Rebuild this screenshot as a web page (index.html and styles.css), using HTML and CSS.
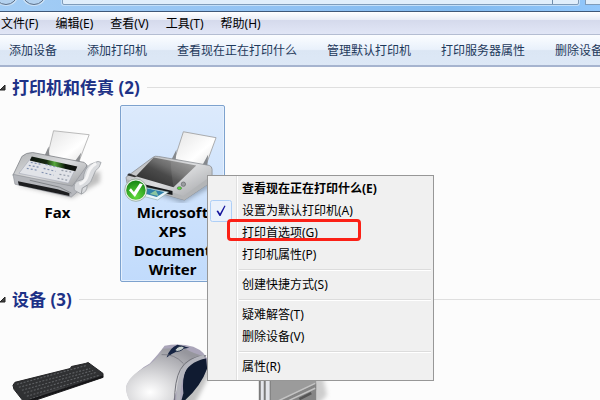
FILE: index.html
```html
<!DOCTYPE html>
<html lang="zh-CN">
<head>
  <meta charset="UTF-8">
  <meta name="viewport" content="width=device-width, initial-scale=1.0">
  <title>设备和打印机</title>
  <link rel="stylesheet" href="styles.css">
</head>
<body>
  <header class="titlebar">
    <button class="nav-btn" aria-label="后退"></button>
    <button class="nav-btn" aria-label="前进"></button>
    <div class="address">
      <input class="address-input" type="text" aria-label="地址">
      <button class="refresh" aria-label="刷新"></button>
    </div>
    <input class="search" type="text" aria-label="搜索">
  </header>

  <nav class="menubar">
    <button>文件(F)</button>
    <button>编辑(E)</button>
    <button>查看(V)</button>
    <button>工具(T)</button>
    <button>帮助(H)</button>
  </nav>

  <div class="toolbar">
    <button>添加设备</button>
    <button>添加打印机</button>
    <button>查看现在正在打印什么</button>
    <button>管理默认打印机</button>
    <button>打印服务器属性</button>
    <button>删除设备</button>
  </div>

  <main class="content">
    <section class="group">
      <h2 class="group-title">
        <svg class="arrow" width="6" height="8" viewBox="0 0 6 8"><path d="M5 1v5H0z" fill="#444" stroke="#222"/></svg>
        <span>打印机和传真 (2)</span>
      </h2>
      <div class="tiles">
        <button class="tile">
          <svg class="icon" viewBox="5 106 104 98">
            <defs>
              <linearGradient id="paper" x1="0" y1="0" x2="1" y2="1"><stop offset="0" stop-color="#e4e4e4"/><stop offset=".6" stop-color="#fff"/><stop offset="1" stop-color="#ddd"/></linearGradient>
              <linearGradient id="body" x1="0" y1="0" x2="1" y2="1"><stop offset="0" stop-color="#b0b2b4"/><stop offset=".5" stop-color="#dcdddf"/><stop offset="1" stop-color="#9a9c9f"/></linearGradient>
              <linearGradient id="screen"><stop offset="0" stop-color="#101510"/><stop offset=".35" stop-color="#172a12"/><stop offset=".52" stop-color="#55a83a"/><stop offset=".75" stop-color="#0c160a"/><stop offset="1" stop-color="#111"/></linearGradient>
              <filter id="soft" x="-30%" y="-30%" width="160%" height="160%"><feGaussianBlur stdDeviation="2"/></filter>
            </defs>
            <path d="M16 186l56 13 15-9 13-7V172l-12 2z" fill="#777" opacity=".45" filter="url(#soft)"/>
            <path d="M53 131L89 135 78 164 47 156z" fill="url(#paper)" stroke="#aaa" stroke-width=".8"/>
            <path d="M48 147l-4 9 5 2zM81 153l-8 11 5 3z" fill="#8b8d90"/>
            <path d="M21 157Q25 153 32 153L84 163Q88 165 86 169L72 188 12 176z" fill="url(#body)" stroke="#808388" stroke-width=".8"/>
            <path d="M12 175L72 187 87 166V184L71 198 14 185z" fill="#b5b7bc" stroke="#8b8e94" stroke-width=".6"/>
            <path d="M17 182L57 190 69 194V197L18 186z" fill="#1d1e20"/>
            <path d="M29 181l30 7 12 6" fill="none" stroke="#818488"/>
            <path d="M29 160L75 170 68 184 18 174z" fill="#e1e3e8" stroke="#a3a8b5" stroke-width=".6"/>
            <path d="M31 157L77 167 75 172 29 161z" fill="url(#screen)"/>
            <g fill="none" stroke="#8291b0" stroke-width="1.2" stroke-dasharray="2 2">
              <path d="M30 163l11 2M28 166l11 2M26 169l11 2"/>
              <path d="M45 165l12 3M43 169l12 3M41 173l12 3"/>
              <path d="M61 171l11 2M59 175l11 2M57 179l10 2" stroke="#959ca8"/>
            </g>
            <path d="M95 163Q98 161 101 163L99 168Q95 170 93 177 91 184 87 186 87 193 81 195L74 191Q73 184 77 182L83 180Q84 169 90 165z" fill="#d9dbde" stroke="#9a9da2" stroke-width=".8"/>
            <path d="M96 164Q89 168 87 177 85 183 79 185" fill="none" stroke="#f4f4f5" stroke-width="3"/>
            <path d="M81 195l1-6 5-3" fill="none" stroke="#999ca0"/>
          </svg>
          <span>Fax</span>
        </button>
        <button class="tile selected">
          <svg class="icon" viewBox="121 106 104 98">
            <defs>
              <linearGradient id="lid" x1="0" y1="1" x2="1" y2="0"><stop offset="0" stop-color="#262626"/><stop offset=".45" stop-color="#4a4a4a"/><stop offset=".6" stop-color="#6c6c6c"/><stop offset="1" stop-color="#a5a5a5"/></linearGradient>
              <radialGradient id="ok" cx=".5" cy=".8" r=".8"><stop offset="0" stop-color="#63dc3d"/><stop offset="1" stop-color="#128112"/></radialGradient>
            </defs>
            <path d="M130 186l53 18 32-18v-8z" fill="#456" opacity=".4" filter="url(#soft)"/>
            <path d="M184 132L217 138 206 168 175 160z" fill="url(#paper)" stroke="#999" stroke-width=".8"/>
            <path d="M177 150l-5 10 4 3zM209 155l-6 11 5 3z" fill="#85898e"/>
            <path d="M153 158Q155 156 159 157L210 166Q213 167 213 170V182L185 201 174 198 127 184 126 178z" fill="url(#body)" stroke="#8a8e93" stroke-width=".8"/>
            <path d="M127 180L175 194 184 197 213 176V182L185 201 127 184z" fill="#b3b5b7"/>
            <path d="M140 184L173 192V196L141 189z" fill="#17191b"/>
            <path d="M154 158L197 166 174 188 136 177z" fill="url(#lid)"/>
            <path d="M171 161L197 166 174 188 172 174z" fill="#fff" opacity=".09"/>
            <path d="M129 174l8 3-2 1-8-2z" fill="#333"/>
            <path d="M145 188L169 193 158 201 139 196z" fill="#e9f5fa" stroke="#8aa" stroke-width=".6"/>
            <path d="M147 189L165 193 157 198 143 194z" fill="#3180a9"/>
            <path d="M150 195l6-4 3 6z" fill="#8bc6a0"/>
            <circle cx="184" cy="185" r="2.2" fill="#9a9da0" stroke="#6c6f72" stroke-width=".8"/>
            <ellipse cx="180" cy="189" rx="2.2" ry="1.5" fill="#54d63a" stroke="#587055" stroke-width=".6"/>
            <circle cx="136" cy="191" r="10.5" fill="url(#ok)" stroke="#e7eee7" stroke-width="1.4"/>
            <circle cx="136" cy="191" r="11.3" fill="none" stroke="#66806a" stroke-width=".5"/>
            <path d="M129 191L131 189 134 193 140 184 143 185 135 198z" fill="#fff"/>
          </svg>
          <span>Microsoft XPS Document Writer</span>
        </button>
      </div>
    </section>

    <section class="group">
      <h2 class="group-title">
        <svg class="arrow" width="6" height="8" viewBox="0 0 6 8"><path d="M5 1v5H0z" fill="#444" stroke="#222"/></svg>
        <span>设备 (3)</span>
      </h2>
      <div class="tiles">
        <button class="tile" aria-label="键盘">
          <svg class="icon" viewBox="5 318 104 98">
            <path d="M12 386L14 383 70 369 71 367 85 364 88 363 103 374V378L29 403 24 404 13 390z" fill="#303133" stroke="#222224"/>
            <g fill="none" stroke="#5e6063" stroke-width="1.1" stroke-dasharray="2 1.5">
              <path d="M16 385L86 366"/>
              <path d="M18 388L90 369"/>
              <path d="M21 391L93 371"/>
              <path d="M23 394L96 373"/>
              <path d="M26 397L99 376"/>
              <path d="M29 400L100 378"/>
            </g>
            <path d="M40 396L64 388" stroke="#3d3e40" stroke-width="2"/>
            <path d="M24 403L103 377" stroke="#161618" stroke-width="2"/>
          </svg>
        </button>
        <button class="tile" aria-label="鼠标">
          <svg class="icon" viewBox="121 318 104 98">
            <defs>
              <radialGradient id="mouse" cx=".3" cy=".75" r=".8"><stop offset="0" stop-color="#fff"/><stop offset=".35" stop-color="#dcdcde"/><stop offset="1" stop-color="#96969d"/></radialGradient>
            </defs>
            <path d="M150 408l45-2 17-34-3-12z" fill="#888" opacity=".5" filter="url(#soft)"/>
            <path d="M165 346Q180 343 194 347 207 352 209 363 207 379 193 390L177 408H135Q124 396 127 385 138 370 150 364 160 353 165 346z" fill="#aaa5b9"/>
            <path d="M163 349Q157 362 143 369 126 379 126 390 127 401 135 408H171L183 376Q188 362 207 357 196 355 184 348z" fill="url(#mouse)"/>
            <path d="M207 359Q196 359 189 366 182 376 184 394L181 405Q201 389 208 369z" fill="#101b31"/>
            <path d="M207 356Q188 357 181 370 175 381 175 404" fill="none" stroke="#6f7078" stroke-width="1"/>
            <path d="M205 357Q187 362 183 374 178 389 179 403" fill="none" stroke="#b4b5bd" stroke-width="4"/>
            <path d="M167 358Q170 348 178 345L190 348Q179 349 167 358z" fill="#152342"/>
            <path d="M176 350q3-5 9-3-1 4-8 5z" fill="#c8d0ce" stroke="#29364e"/>
            <path d="M162 355Q175 354 184 364" fill="none" stroke="#777780" stroke-width=".8"/>
          </svg>
        </button>
        <button class="tile" aria-label="计算机">
          <svg class="icon" viewBox="236 318 104 98">
            <path d="M270 360h50l8 36-12 12h-40z" fill="#888" opacity=".4" filter="url(#soft)"/>
            <path d="M260 350h57v40l-2 16h-55z" fill="#9b9b9b"/>
            <path d="M259 350h12v60h-12z" fill="#7a7a7a"/>
            <path d="M261 350h3v60h-3zM266 350h4v60h-4z" fill="#e3e5eb"/>
            <path d="M280 402L317 384V402z" fill="#858585"/>
            <path d="M278 402L316 384M288 402L316 389" stroke="#c4c4c4" stroke-width="1.5"/>
            <path d="M300 400L312 394" stroke="#555" stroke-width="2.500"/>
          </svg>
        </button>
      </div>
    </section>
  </main>

  <div class="context-menu" role="menu">
    <button class="default" role="menuitem">查看现在正在打印什么(E)</button>
    <button class="checked" role="menuitem">
      <svg class="check" width="22" height="22" viewBox="0 0 22 22"><rect x=".5" y=".5" width="21" height="21" rx="2" fill="#eaf1fb" stroke="#aecff7"/><path d="M6.500 11L8 10.500 10 13.500 14.500 5.500 15.500 6 10.500 16H9.500z" fill="#13139c"/></svg>
      设置为默认打印机(A)
    </button>
    <button class="marked" role="menuitem">打印首选项(G)</button>
    <button role="menuitem">打印机属性(P)</button>
    <hr>
    <button role="menuitem">创建快捷方式(S)</button>
    <hr>
    <button role="menuitem">疑难解答(T)</button>
    <button role="menuitem">删除设备(V)</button>
    <hr>
    <button role="menuitem">属性(R)</button>
  </div>
</body>
</html>
```

FILE: styles.css
```css
*, *::after {
  box-sizing: border-box;
}
body {
  margin: 0;
  height: 100vh;
  overflow: hidden;
  display: flex;
  flex-direction: column;
  background: #fcfcfc;
  font-family: "Noto Sans", "Noto Sans CJK SC", sans-serif;
  font-size: 12px;
  line-height: 18px;
  color: #000;
}
button {
  margin: 0;
  padding: 0;
  border: 0;
  background: none;
  font: inherit;
  color: inherit;
  white-space: nowrap;
}
.titlebar {
  flex: none;
  height: 12px;
  display: flex;
  align-items: flex-end;
  overflow: hidden;
  padding-bottom: 6px;
  background: linear-gradient(90deg, #a3cdf5, #8fc1f3 50%, #80b9ef 75%, #92c7fb);
  border-bottom: 1px solid #3f5878;
}
.nav-btn {
  flex: none;
  width: 24px;
  height: 24px;
  margin-right: 4px;
  border: 1px solid #5b6f88;
  border-radius: 50%;
  background: #b4d2ef;
  box-shadow: 0 0 0 1px #cfe3f6;
}
.nav-btn:first-child {
  margin-left: -6px;
}
.address {
  flex: 1;
  display: flex;
  height: 24px;
  margin-left: 12px;
  border: 1px solid #7f9cba;
  border-radius: 2px;
  background: #e0eefb;
  box-shadow: 0 0 0 1px #c3dff9;
}
.address-input {
  flex: 1;
  min-width: 0;
  border: 0;
  background: none;
}
.refresh {
  width: 26px;
  border-left: 1px solid #6f8dac;
}
.search {
  flex: none;
  width: 15px;
  height: 24px;
  margin-left: 6px;
  padding: 0;
  border: 1px solid #7f9cba;
  border-right: 0;
  background: #e0eefb;
}
.menubar {
  flex: none;
  height: 23px;
  display: flex;
  gap: 17px;
  padding: 2px 0 0 1px;
  background: linear-gradient(#fff, #e8ecf6 36%, #d5daec 37%, #e1e6f6);
  border-bottom: 1px solid #b4bdd2;
}
.toolbar {
  flex: none;
  height: 32px;
  display: flex;
  gap: 30px;
  padding: 2px 0 0 9px;
  overflow: hidden;
  color: #1e395b;
  background: linear-gradient(#fbfdff, #e9f1fb 48%, #dbe6f4 52%, #dde8f6);
  border-bottom: 2px solid #a6b4cf;
}
.content {
  flex: 1;
  min-height: 0;
  padding-top: 3px;
  overflow: hidden;
}
.group-title {
  display: flex;
  align-items: center;
  gap: 6px;
  height: 35px;
  margin: 0;
  font-size: 17px;
  line-height: 24px;
  color: #1e3287;
}
.group-title::after {
  content: "";
  flex: 1;
  height: 1px;
  background: #dfdfdf;
  margin-left: 1px;
}
.tiles {
  display: flex;
  align-items: flex-start;
  gap: 10px;
  padding-left: 5px;
}
.tile {
  width: 105px;
  min-height: 177px;
  display: flex;
  flex-direction: column;
  align-items: stretch;
  border: 1px solid transparent;
  border-radius: 2px;
  font-size: 15px;
  font-weight: bold;
  line-height: 19px;
  text-align: center;
  white-space: normal;
}
.tile span {
  padding: 0 10px;
}
.tile.selected {
  border-color: #7da2ce;
  background: linear-gradient(#dceafc, #c1dbfc);
  box-shadow: inset 0 0 0 1px #e5f0fd;
}
.icon {
  display: block;
  height: 97px;
}
.context-menu {
  position: absolute;
  left: 207px;
  top: 175px;
  width: 227px;
  padding: 2px;
  display: flex;
  flex-direction: column;
  border: 1px solid #979797;
  background: linear-gradient(90deg, #f1f1f1 28px, #e0e0e0 28px, #e0e0e0 29px, #fff 29px, #fff 30px, #f0f0f0 30px);
}
.context-menu button {
  position: relative;
  height: 22px;
  padding-left: 32px;
  text-align: left;
}
.context-menu hr {
  width: 192px;
  height: 2px;
  margin: 3px 0 3px auto;
  border: 0;
  border-top: 1px solid #dcdcdc;
  background: #fff;
}
.context-menu .default {
  font-weight: bold;
}
.check {
  position: absolute;
  left: 0;
  top: 0;
}
/* red frame around the preferences entry */
.marked::after {
  content: "";
  position: absolute;
  left: 17px;
  top: -3px;
  width: 134px;
  height: 22px;
  border: 3px solid #fb2016;
  border-radius: 4px;
}
```
